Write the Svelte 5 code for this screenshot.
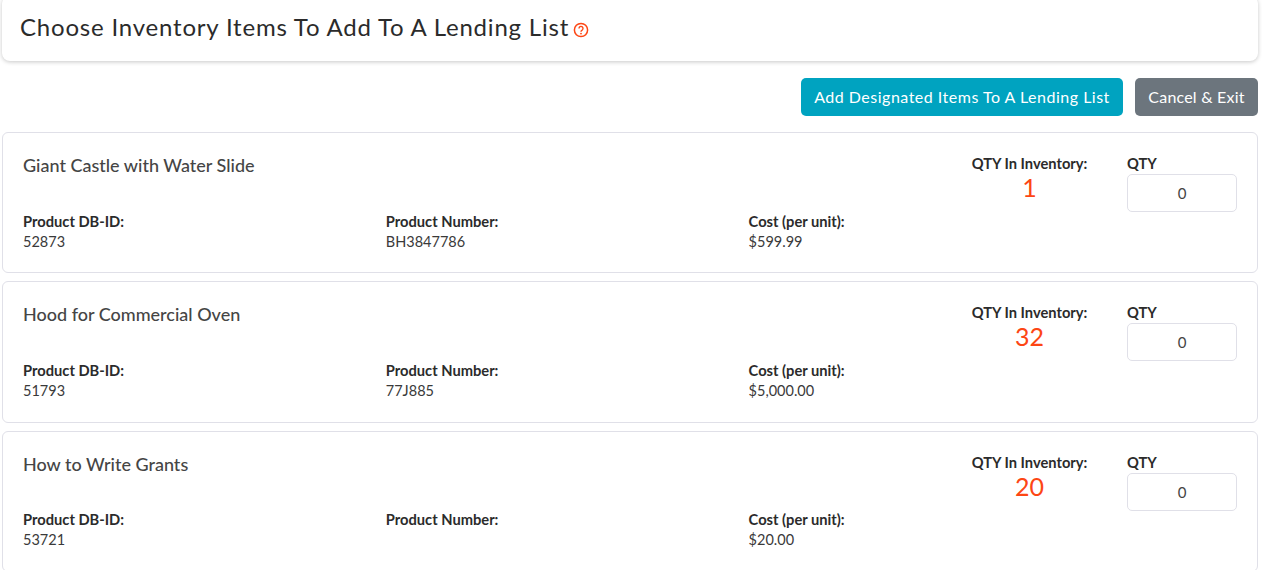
<script>
  const items = [
    { name: 'Giant Castle with Water Slide', id: '52873', number: 'BH3847786', cost: '$599.99', stock: 1 },
    { name: 'Hood for Commercial Oven', id: '51793', number: '77J885', cost: '$5,000.00', stock: 32 },
    { name: 'How to Write Grants', id: '53721', number: '', cost: '$20.00', stock: 20 }
  ];
</script>

<div class="page">
  <header class="title-card">
    <h1>Choose Inventory Items To Add To A Lending List</h1>
    <svg class="help" viewBox="0 0 16 16" width="16" height="16" aria-hidden="true">
      <circle cx="8" cy="8" r="6.6" fill="none" stroke="#fd4614" stroke-width="1.5" />
      <path d="M6 6.4a2 2 0 1 1 3.1 1.7c-.8.5-1.1.8-1.1 1.6" fill="none" stroke="#fd4614" stroke-width="1.4" />
      <circle cx="8" cy="11.6" r=".9" fill="#fd4614" />
    </svg>
  </header>

  <div class="actions">
    <button class="btn primary">Add Designated Items To A Lending List</button>
    <button class="btn secondary">Cancel &amp; Exit</button>
  </div>

  {#each items as item}
    <section class="card">
      <div class="top">
        <h2>{item.name}</h2>
        <div class="stock">
          <strong>QTY In Inventory:</strong>
          <span class="count">{item.stock}</span>
        </div>
        <div class="qty">
          <strong>QTY</strong>
          <input value="0" />
        </div>
      </div>
      <div class="details">
        <div><strong>Product DB-ID:</strong><span>{item.id}</span></div>
        <div><strong>Product Number:</strong><span>{item.number}</span></div>
        <div><strong>Cost (per unit):</strong><span>{item.cost}</span></div>
      </div>
    </section>
  {/each}
</div>

<style>
  :global(body) {
    margin: 0;
    background: #fff;
    overflow: hidden;
  }
  .page {
    box-sizing: border-box;
    width: 1262px;
    height: 570px;
    overflow: hidden;
    padding: 0 4px 0 2px;
    font-family: Lato, "Open Sans", sans-serif;
    font-size: 14px;
    color: #333;
  }
  .title-card {
    display: flex;
    align-items: center;
    height: 61px;
    margin-top: -4px;
    padding: 0 18px 4px;
    box-sizing: content-box;
    border-radius: 8px;
    background: #fff;
    box-shadow: 0 1px 4px rgba(0, 0, 0, 0.22);
  }
  h1 {
    margin: 0;
    font-size: 24px;
    font-weight: 400;
    color: #2b2b2b;
    letter-spacing: 0.8px;
  }
  .help {
    margin: 7px 0 0 4px;
  }
  .actions {
    display: flex;
    justify-content: flex-end;
    gap: 12px;
    margin: 17px 0 16px;
  }
  .btn {
    height: 38px;
    padding: 0 0 2px;
    border: 0;
    border-radius: 5px;
    color: #fff;
    font: inherit;
    font-size: 16px;
  }
  .primary {
    width: 322px;
    background: #00a3c0;
    letter-spacing: 0.5px;
  }
  .secondary {
    width: 123px;
    background: #6c757d;
    letter-spacing: 0.2px;
  }
  .card {
    box-sizing: border-box;
    height: 141.4px;
    margin-bottom: 8px;
    padding: 20px 20px 0;
    border: 1px solid #e0e0e8;
    border-radius: 6px;
  }
  .top {
    display: flex;
    align-items: flex-start;
  }
  h2 {
    flex: 1;
    margin: 0;
    padding-top: 1px;
    font-size: 18px;
    font-weight: 500;
    line-height: 22px;
    color: #454545;
  }
  .stock {
    display: flex;
    flex-direction: column;
    align-items: center;
    width: 115px;
    margin-right: 40px;
    white-space: nowrap;
  }
  strong {
    font-size: 14.7px;
    font-weight: 700;
    line-height: 20px;
    color: #2b2b2b;
  }
  .count {
    font-size: 25px;
    line-height: 28px;
    color: #fd4614;
  }
  .qty {
    display: flex;
    flex-direction: column;
    gap: 1px;
    width: 110px;
  }
  input {
    box-sizing: border-box;
    width: 110px;
    height: 38px;
    border: 1px solid #e0e0e8;
    border-radius: 5px;
    font: inherit;
    font-size: 15px;
    text-align: center;
    color: #444;
    outline: 0;
  }
  .details {
    display: grid;
    grid-template-columns: repeat(3, 362.8px);
    margin-top: -1.4px;
  }
  .details div {
    display: flex;
    flex-direction: column;
  }
  .details span {
    min-height: 22px;
    line-height: 22px;
    font-size: 14.5px;
    color: #3a3a3a;
  }
</style>
